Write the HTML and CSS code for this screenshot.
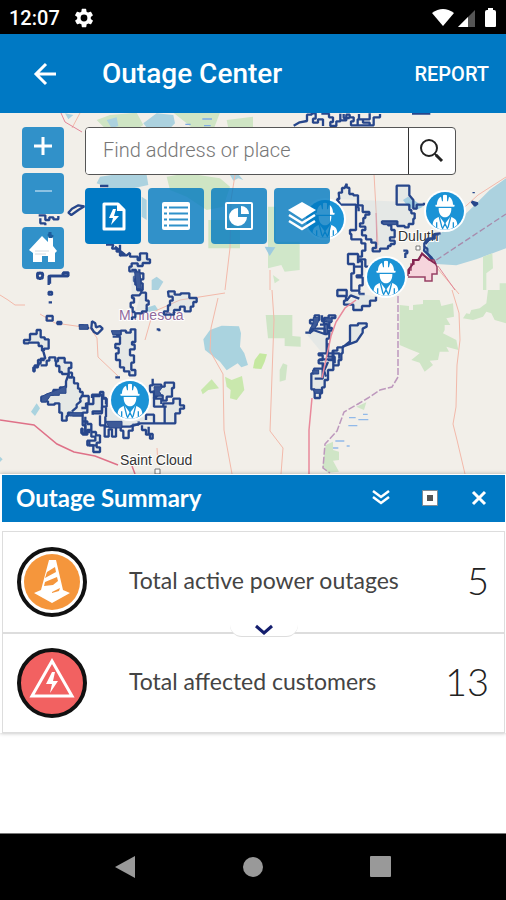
FILE: index.html
```html
<!DOCTYPE html>
<html lang="en">
<head>
<meta charset="utf-8">
<meta name="viewport" content="width=device-width, initial-scale=1">
<title>Outage Center</title>
<link rel="stylesheet" href="styles.css">
</head>
<body>
<div class="status">
  <span>12:07</span>
  <svg class="gear" viewBox="0 0 24 24" width="22" height="22" aria-hidden="true"><path fill="#fff" fill-rule="evenodd" d="M19.4 13a7.500 7.500 0 0 0 0-2l2.100-1.600a.5.5 0 0 0 .1-.7l-2-3.400a.5.5 0 0 0-.6-.2l-2.500 1a7.300 7.300 0 0 0-1.700-1l-.4-2.600a.5.500 0 0 0-.5-.5h-4a.5.500 0 0 0-.4.500l-.4 2.600a7.700 7.700 0 0 0-1.700 1l-2.500-1a.5.500 0 0 0-.6.2l-2 3.400a.5.500 0 0 0 .1.700L4.600 11a7.500 7.500 0 0 0 0 2l-2.100 1.600a.5.500 0 0 0-.1.700l2 3.400c.1.200.4.300.6.200l2.500-1a7.300 7.300 0 0 0 1.700 1l.4 2.600c0 .3.200.5.4.5h4c.3 0 .5-.2.500-.5l.4-2.600a7.700 7.700 0 0 0 1.700-1l2.500 1c.2.100.5 0 .6-.2l2-3.400a.5.500 0 0 0-.1-.7zM12 15.700a3.700 3.700 0 1 1 0-7.400 3.700 3.700 0 0 1 0 7.400z"/></svg>
  <svg class="signals" viewBox="0 0 66 20" width="66" height="20" aria-hidden="true"><path fill="#fff" d="M0 5Q11-3 22 5L11 18z"/><path fill="#555" d="M26 19 43 2v17z"/><path fill="#fff" d="M26 19 36 9v10z"/><path fill="#fff" d="M53 4q0-2 2-2h1V0h5v2h1q2 0 2 2v14q0 1-1 1h-9q-1 0-1-1z"/></svg>
</div>

<header class="appbar">
  <button class="back" aria-label="Back"><svg viewBox="0 0 24 24" width="24" height="24"><path d="M23 12H3M13 2 3 12l10 10" fill="none" stroke="#fff" stroke-width="3"/></svg></button>
  <h1>Outage Center</h1>
  <button class="report">REPORT</button>
</header>

<main>
<section class="map" aria-label="Outage map">
  <svg class="basemap" viewBox="0 113 506 361" preserveAspectRatio="xMidYMin slice">
    <defs>
      <g id="crew">
        <circle r="63" fill="#fff"/><circle r="57" fill="#1b93d6"/>
        <path fill="#fff" d="M-24-19C-24-33-18-40-12-43L-9-29H-6V-47Q0-50 6-47V-29H9L12-43C18-40 24-33 24-19H28Q31-15 27-13H-27Q-31-15-28-19zM-19-9H19C20 9 10 19 0 19S-20 9-19-9zM-37 41C-36 26-30 22-16 17L0 38 16 17C30 22 36 26 37 41Q22 56 0 56T-37 41z"/>
        <path d="M-25 34V50M25 34V50M-17 18-9 50M17 18 9 50M-8 54 0 38 8 54" fill="none" stroke="#1b93d6" stroke-width="4"/>
      </g>
    </defs>
    <rect y="113" width="506" height="361" fill="#f2efe9"/>

    <!-- forests and lakes -->
    <g transform="translate(0 110) scale(.33333)">
      <path fill="#cfe5c4" d="M290 30 330 15 410 8 430 45 390 70H330zM520 8H660L640 60 600 75 560 40zM680 30 759 20V80H690zM500 200 560 190 660 205 690 230 670 290 620 300 560 260 510 240zM625 330H720V415H625zM330 250 390 240 400 330H330z"/>
      <path fill="#acd2df" d="M430 40 470 10 520 15 525 40 490 75 450 65zM300 200 370 190 440 195 445 225 400 235 380 260 330 235 290 220zM195 10 220 15 205 28zM320 30 350 22 355 48 335 55zM425 260 440 270 440 330 425 320zM455 510 470 500 490 515 475 540H455zM690 195 712 190 730 210 715 205 700 212z"/>
      <path d="M607 27H636M556 43H572M612 47H632" stroke="#7fabe3" stroke-width="4"/>
    </g>
    <g transform="translate(253 110) scale(.33333)">
      <path fill="#acd2df" d="M759 205 710 240 660 290 640 310 575 360 525 400 515 425 550 462 610 466 670 448 759 415z"/>
      <path fill="#d0e7c9" d="M45 290H68V395H140V480L95 485 85 465 45 475zM690 440 718 430 720 475 700 490V540H690zM740 520H759V560H740zM60 495 80 510 65 520z"/>
      <path fill="#9dcbe0" d="M35 410 67 412 50 438zM450 270 465 260 490 275 510 290 490 300 465 290z"/>
      <path d="M550 450 759 312" fill="none" stroke="#a88bac" stroke-width="4" stroke-dasharray="18 8"/>
    </g>
    <g transform="translate(0 290) scale(.33333)">
      <path fill="#aad3df" d="M610 148 630 120 665 107 717 109 723 130 720 170 733 190 744 225 724 232 713 220 680 241 660 215 615 180zM93 365 110 340 120 355 105 378zM435 55 465 45 475 60 445 67zM0 500 8 508 0 516z"/>
      <path fill="#c9e8ad" d="M603 300 635 268 657 295 625 300 608 313zM675 260 695 270 726 258 733 300 710 330 690 325 692 300 680 290z"/>
    </g>
    <g transform="translate(253 290) scale(.33333)">
      <path fill="#cfe5c6" d="M38 75H118V138L143 140V170L95 168V145H45zM440 45 468 48V60H480V45L510 42V30H560L565 48 600 40 603 80 580 85 592 105H575V120L570 130 610 150 616 180 580 170 588 185H560L555 210 530 212 540 225 515 245 500 218 475 210 500 190 470 178 440 165zM705 0H759V100L725 90 715 70 700 65 690 80 660 90 630 85 640 70 650 72 655 60 680 55 700 40zM80 240 90 220 103 225 98 270 80 275zM310 350 340 337 333 360zM218 465 240 455 240 480 258 485V510L240 512 258 545 225 548 208 535z"/>
      <path fill="#c5e8a0" d="M5 210 20 190 42 193 35 215 25 237 0 235z"/>
      <path d="M288 383H308M330 373H344M316 389H346M286 407H313M247 453H274M281 468H290M240 474H256" stroke="#91b9e9" stroke-width="4"/>
    </g>

    <!-- roads and state line -->
    <path d="M80 113 72 128M0 295 8 300 15 305 25 305M40 314 55 323 90 328 97 338 98 357 118 376M157 448 158 464M235 175 231 200 230 248 225 290M218 298 211 328 210 351 223 374 224 430 232 474M145 340 153 312 180 300 225 293M272 290 274 320 270 431 283 448 281 474M270 270V290M374 174 378 245M452 290 459 313 460 340 457 365 456 407 453 424 457 440 465 474M437 268 459 294M455 216 478 195 506 177" fill="none" stroke="#f3b9aa" stroke-width="1"/>
    <path d="M61 113 65 122 82 132M376 213 377 250M438 266 455 290" fill="none" stroke="#e28798" stroke-width="1"/>
    <path d="M0 420 34 425 57 444 74 452 95 456 118 465M132 466 135 474" fill="none" stroke="#df7188" stroke-width="1.500"/>
    <path d="M398 296V377L392 387 380 390 368 398 358 404 344 412 337 431 325 444 323 468 330 473" fill="none" stroke="#bd98bd" stroke-width="1.500" stroke-dasharray="7 2"/>

    <!-- place names -->
    <g class="places"><text class="region" x="119" y="320">Minnesota</text><text x="398" y="241">Duluth</text><text x="120" y="465">Saint Cloud</text></g>
    <path d="M416 246h4v4h-4zM155 469h5v5h-5z" fill="#fff" stroke="#777"/>

    <!-- service territory outlines -->
    <g class="territory">
      <g transform="translate(0 110) scale(.33333)">
        <path d="M116 316H136V330H148V322H160V328H175V318M121 325V340H136V346M205 308 216 296 235 286 253 289 235 300 214 315zM300 228H325M318 404H340L336 416H350V425H364V436H380L390 428M345 410 375 434 360 437V404"/>
        <path class="area" d="M390 428V440H413V450H420V430H441V448H450V459H428V468H413V460H395V470H388V484H410V500H402V514H412V540H428V520H422V508H430V490H418V478"/>
        <path d="M112 489H128V505H112zM150 521V498H205V487H190V500M146 577H156"/>
      </g>
      <g transform="translate(253 110) scale(.33333)">
        <path d="M122 47 140 37 162 33V14H176V10H188V26H180V38H195V28H210V48M205 11H228V22H240V36H232V48H250V34H262V11M260 31H280V14H290V22H302V34H294V46H314V28H330V38H350V46H362V22H381V12M272 12V24H290M318 12V28H350V10M310 46H360M477 11H532M557 373 540 376V386H524L514 400V410L523 416V430L546 459M656 275 674 280 666 287zM662 246V250"/>
      </g>
      <g transform="translate(300 180) scale(.33333)">
        <path class="area" d="M110 57H118L116 38H126V24H134L140 11V22L148 24V42H160V46H174V76H188V96H208V104H196V114H190V130H180V140H196V150H186V166H198V178H214V188H228V204H218V214H240V206H264V198H272V192H284V182H270V172H284V150H274V136H264V130H246V124H292V138H314V142H326V132H340V116H344V100H334V90H328V74H290V17H328V46L340 60V86H350V74H372V68"/>
        <path d="M110 57 122 74H168V150H150V162H154V178H184V190H196V212H186V230H174V222H144V252H162V260H186V244H178V238H196V260H206M168 74 176 84V94M162 260V280H154V332H178V342H194M186 260V286H170V292H188V316H178V330M174 222V250"/>
        <path class="area" d="M126 330H112V348H138V362H132V374H160V390H186V378H210V362H228V350M112 330H140V350M140 362 152 346 178 356M310 212H322V220H316V234M374 200 372 212 394 232 404 246M422 160 404 162V176H390L376 192"/>
        <path class="area" d="M16 458H30V450H38V430H30V420H44V406H58V420H50V436H44V446H74V462H82V432H72V414H86V406H106V414H94V426H88V444H96V452H88V476H80V520H56V526H68V540H56V550H70V566H42V580H34V628H44V654H60V640H66V622H74V600H84V570H100V556H116V540H124V520H128V500L170 484 188 458V446L200 440V430H174V436H150V484L128 502H112V512H98V540H84"/>
        <path d="M28 460 40 450 74 462V434H60M66 406V424H86M84 490V530H104V550M82 520H118V536M58 538H104M68 550V596H44M84 546 72 572 78 590M100 512V556"/>
        <path class="mass" d="M30 446 40 430V412H56V424L44 446zM74 414H96V426H80zM38 570H56V582H38zM40 628H62V640H44zM246 124H290V134H250z"/>
      </g>
      <g transform="translate(20 270) scale(.33333)">
        <path d="M51 16 60 8 70 14 60 28zM86 45V18H144V10H128V22M86 66H96V74H86zM80 138H98V152H80zM112 156H124V162H112zM176 166H190V172H204V178M216 154 226 160 228 172 240 168 248 176 240 184 232 192 222 186 214 174zM410 178H418V184"/>
        <path class="area" d="M334 0H348V14H356V26H346V44H352V60H364V68H378V92H386V104H380V124H366V130H346V142H336V150M364 68 358 76H336V84H342V98H332V112H338V126H346M444 64H464V74H482V70H508V84H530V96H520V110H512V124H494V110H480V120H462V134H432V124H444V106H450V92H458V80H446z"/>
        <path class="area" d="M276 188H290V194H302V182H318V188H332V178H346V216H336V224H344V238H330V256H342V278H334V300H346V316H328V304H312V292H300V270H288V250H296V234H286V222H300V200H278"/>
        <path class="area" d="M12 210H30V192H50V180H62V202H74V208H86V236H72V242H66V228H56V218H26V220H12zM70 244 76 266H62V280H56V286H44V304H40V292H54V270H74M62 286H80V272H88V262H106V274H114V264H134V278H154V294H146V308H156V322H146V312H126V306H118V288H108V272"/>
        <path class="area" d="M146 312 138 334V352H120V360H100V374H80V380H64V394H84V404H104V400H118V428H126V452H140V438H144V428H158V436H188V466H196V490H184V476H188V494H202V480H214V500H226V512H202V526H220V546H240V532H230V518H240V496H228V486H214V462H202V454H188V428H202V402H220V378H240V366H250V386H260V410H246V424H218V434"/>
        <path d="M146 322H162V340H174V356H180V366H188V376L180 386 182 394 170 404V412L156 424M182 378H206V400H198V414H184M216 384V374H246V430H218M246 384H258V402M240 436V466H254V500H266V478H276V500H288V470H302V482H310V504H326V482H338V464H356V454"/>
        <path class="area" d="M258 412V440H256V470H330L362 460H466V430H480V416H492V406H480V386H460V400H430V410H434V460M398 326V346H390V366H402V410H440M400 344H424V350H434V338H462V354H456V380H440V392H428V376H414V364H398M366 466V480H378V494H390V506H398V492H386V470M378 450V434H402V458"/>
        <path d="M286 322H300M196 440V486H210M208 510V526H228M414 376 400 386H424V402"/>
        <path class="mass" d="M64 380 80 372 116 358 138 346V370H118V376H92L78 396H64zM274 182H302V194H278zM258 454H306V474H268zM178 164H204V178H178zM148 428H186V438H148zM402 350H428L418 364 426 378H404zM344 6H360L364 56H350z"/>
      </g>
    </g>
    <path d="M356 300 345 308 336 322 331 336 328 350 322 378M309 474V430L312 398M385 285 374 292" fill="none" stroke="#e9899b" stroke-width="1.500"/>
    <path d="M408 276V270H411V264H414V260H419L422 253 429 260H434L437 267V274H432V281H425V277H408" fill="#f6d5dc" stroke="#984064" stroke-width="1.500"/>
    <path d="M409 274V269L413 264V260H418L422 254 430 260 436 264" fill="none" stroke="#842552" stroke-width="2"/>

    <use href="#crew" transform="translate(325 219) scale(.33333)"/><use href="#crew" transform="translate(445 211) scale(.33333)"/><use href="#crew" transform="translate(386 277) scale(.33333)"/><use href="#crew" transform="translate(130 400) scale(.33333)"/>
  </svg>

  <div class="controls">
    <div class="zoom">
      <button aria-label="Zoom in"><svg viewBox="0 0 40 40" width="40" height="40"><path d="M11 18H29M20 9V27" stroke="#fff" stroke-width="3"/></svg></button>
      <button aria-label="Zoom out"><svg viewBox="0 0 40 40" width="40" height="40"><path d="M12 17H29" stroke="#8cc2e3" stroke-width="2"/></svg></button>
      <button class="home" aria-label="Default extent"><svg viewBox="0 0 42 42" width="42" height="42"><path fill="#fff" d="M7 23 20 9 26 15V10H31V19L35 24 33 26V35H26V29H20V35H11V26z"/><path d="M13 24H27M13 27H24" stroke="#d3dae0"/><path d="m26 7 5 3M28 5v6" stroke="#1c5d9c" stroke-width="3"/></svg></button>
    </div>
    <div class="tools">
      <form class="search">
        <input type="search" placeholder="Find address or place" aria-label="Find address or place">
        <button type="button" aria-label="Search"><svg viewBox="0 0 46 46" width="46" height="46"><circle cx="20" cy="20" r="8" fill="none" stroke="#222" stroke-width="2"/><path d="m26 26 3 3" stroke="#222" stroke-width="2"/><path d="m27 27 6 6" stroke="#222" stroke-width="3"/></svg></button>
      </form>
      <div class="widgets">
        <button class="active" aria-label="Outage summary"><svg viewBox="0 0 56 56" width="56" height="56"><path d="M19 16H33L39 22V41H19z" fill="none" stroke="#fff" stroke-width="3" stroke-linejoin="round"/><path d="M32 15v8h8" fill="#fff"/><path fill="#fff" d="M28 21 24 30H28L26 37 34 28H29L31 21z"/></svg></button>
        <button aria-label="Legend"><svg viewBox="0 0 56 56" width="56" height="56"><rect x="14" y="14" width="28" height="28" rx="2" fill="#fff"/><path d="M16 19.500H19M16 25.500H19M16 31.500H19M16 37.500H19M21 19.500H40M21 25.500H40M21 31.500H40M21 37.500H40" stroke="#2f91ca" stroke-width="2"/></svg></button>
        <button aria-label="Statistics"><svg viewBox="0 0 56 56" width="56" height="56"><rect x="15" y="15" width="26" height="26" rx="1" fill="none" stroke="#fff" stroke-width="2"/><path fill="#fff" d="M27 20V29H36A9 9 0 1 1 27 20zM30 18A8 8 0 0 1 38 26H30z"/></svg></button>
        <button aria-label="Layers"><svg viewBox="0 0 56 56" width="56" height="56"><path fill="#fff" d="M28 14 42 22 28 31 14 22z"/><path d="M15 27 28 35 41 27M15 33 28 41 41 33" fill="none" stroke="#fff" stroke-width="2.500"/></svg></button>
      </div>
    </div>
  </div>
</section>

<section class="panel">
  <div class="panel-head">
    <h2>Outage Summary</h2>
    <button aria-label="Collapse"><svg viewBox="0 0 20 20" width="20" height="20"><path d="M2 3 10 9 18 3M2 9 10 15 18 9" fill="none" stroke="#fff" stroke-width="2.500"/></svg></button>
    <button aria-label="Maximize"><svg viewBox="0 0 20 20" width="20" height="20"><path fill="#fff" stroke="#7f8b95" d="M2.500 2.500h15v15h-15z"/><path fill="#555" d="M7 7h6v6H7z"/></svg></button>
    <button aria-label="Close"><svg viewBox="0 0 20 20" width="20" height="20"><path d="m4 4 12 12M16 4 4 16" stroke="#fff" stroke-width="3"/></svg></button>
  </div>
  <div class="cards">
    <div class="card">
      <svg viewBox="0 0 70 70" width="70" height="70" aria-hidden="true"><circle cx="35" cy="35" r="33" fill="#fff" stroke="#111" stroke-width="4"/><circle cx="35" cy="35" r="28" fill="#f5963c"/><path fill="#fff" d="M32 13H39L46 43 53 46 35 56 17 46 24 43z"/><path fill="#f5963c" d="M30 25 38 20 39 25 28 31zM28 35 40 30 41 34 36 38 27 39zM35 45 43 41 42 44 35 46z"/></svg>
      <span class="label">Total active power outages</span><span class="value">5</span>
    </div>
    <div class="card">
      <svg viewBox="0 0 70 70" width="70" height="70" aria-hidden="true"><circle cx="35" cy="35" r="33" fill="#f26161" stroke="#111" stroke-width="4"/><path d="M35 13 55 48H15z" fill="none" stroke="#fff" stroke-width="3"/><path fill="#fff" d="M35 24 29 36H35L33 45 41 33H36L38 24z"/></svg>
      <span class="label">Total affected customers</span><span class="value">13</span>
    </div>
    <button class="toggle" aria-label="Show less"><svg viewBox="0 0 20 12" width="20" height="12"><path d="M2 2 10 9 18 2" fill="none" stroke="#141e6e" stroke-width="3"/></svg></button>
  </div>
</section>
</main>

<nav class="navbar" aria-label="System">
  <button aria-label="Back"><svg viewBox="0 0 24 24" width="24" height="24"><path fill="#999" d="M2 12 22 1V23z"/></svg></button>
  <button aria-label="Home"><svg viewBox="0 0 24 24" width="24" height="24"><circle cx="12" cy="12" r="10" fill="#999"/></svg></button>
  <button aria-label="Recent apps"><svg viewBox="0 0 24 24" width="24" height="24"><rect x="1" y="1" width="21" height="21" rx="1" fill="#999"/></svg></button>
</nav>
</body>
</html>
```
FILE: styles.css
```css
* { box-sizing: border-box; }
body {
  margin: 0;
  min-height: 100vh;
  display: flex;
  flex-direction: column;
  background: #fff;
  font-family: Roboto, "Liberation Sans", sans-serif;
}
button {
  padding: 0;
  border: 0;
  background: none;
  color: inherit;
  font: inherit;
}
svg { display: block; }
h1, h2 { margin: 0; }

.status {
  height: 34px;
  padding: 2px 8px 0 9px;
  display: flex;
  align-items: center;
  background: #000;
  color: #fff;
  font-size: 20px;
  font-weight: 500;
}
.gear { margin-left: 13px; }
.signals { margin-left: auto; }

.appbar {
  height: 79px;
  padding: 0 17px 0 33px;
  display: flex;
  align-items: center;
  background: #0079c4;
  color: #fff;
}
.appbar h1 {
  margin-left: 45px;
  font-size: 28px;
  font-weight: 500;
}
.report {
  margin-left: auto;
  font-size: 20px;
  font-weight: 500;
}

main { flex: 1; }
.map {
  position: relative;
  overflow: hidden;
}
.basemap { width: 100%; height: auto; }
.places {
  font: 14px "Liberation Sans", sans-serif;
  fill: #333;
  stroke: #fff;
  stroke-width: 2px;
  paint-order: stroke;
}
.places .region { fill: #906a9d; }
.territory {
  fill: none;
  stroke: #27468b;
  stroke-width: 7;
  stroke-linejoin: bevel;
}
.territory .area { fill: rgba(190, 212, 224, .25); }
.territory .mass { fill: #3d5a98; stroke-width: 3; }

.controls {
  position: absolute;
  inset: 0;
  padding: 14px 50px 0 22px;
  display: flex;
  gap: 21px;
}
.zoom {
  width: 42px;
  display: flex;
  flex-direction: column;
  gap: 5px;
}
.zoom button, .widgets button {
  display: grid;
  place-items: center;
  border-radius: 4px;
  background: rgba(0, 121, 193, .8);
}
.zoom button { height: 41px; }
.zoom .home { margin-top: 8px; height: 42px; }
.tools { flex: 1; min-width: 0; }
.search {
  height: 48px;
  display: flex;
  border: 1px solid #555;
  border-radius: 4px;
  background: #fff;
  overflow: hidden;
}
.search input {
  flex: 1;
  min-width: 0;
  padding: 0 17px 2px;
  border: 0;
  border-right: 1px solid #333;
  background: #fff;
  font: 300 20px Roboto, sans-serif;
}
.search input::placeholder { color: #777; }
.widgets {
  margin-top: 13px;
  display: flex;
  gap: 7px;
}
.widgets button { width: 56px; height: 56px; }
.widgets .active { background: #0079c4; }

.panel {
  position: relative;
  padding: 1px 1px 0 2px;
  background: #fff;
  font-family: Lato, "Open Sans", sans-serif;
  box-shadow: 0 0 4px rgba(0, 0, 0, .3);
}
.panel-head {
  height: 47px;
  padding: 0 16px 2px 14px;
  display: flex;
  align-items: center;
  gap: 29px;
  background: #0079c4;
  color: #fff;
}
.panel-head h2 {
  margin-right: auto;
  font-size: 24px;
  font-weight: 700;
}
.cards {
  position: relative;
  margin-top: 9px;
  border: 1px solid #ddd;
}
.card {
  height: 100px;
  padding: 0 15px 0 14px;
  display: flex;
  align-items: center;
  color: #222;
}
.card + .card { border-top: 2px solid #ddd; }
.label, .value { padding-bottom: 5px; }
.label {
  margin-left: 42px;
  font-size: 23px;
  font-weight: 400;
  color: #444;
}
.value {
  margin-left: auto;
  font-size: 38px;
  font-weight: 300;
}
.toggle {
  position: absolute;
  top: 92px;
  left: calc(50% - 24px);
  width: 68px;
  height: 13px;
  display: grid;
  place-items: center;
  border-bottom: 1px solid #ddd;
  border-radius: 0 0 12px 12px;
  background: #fff;
}

.navbar {
  height: 67px;
  padding: 0 113px;
  display: flex;
  align-items: center;
  justify-content: space-between;
  border-top: 1px solid #777;
  background: #000;
}
```
